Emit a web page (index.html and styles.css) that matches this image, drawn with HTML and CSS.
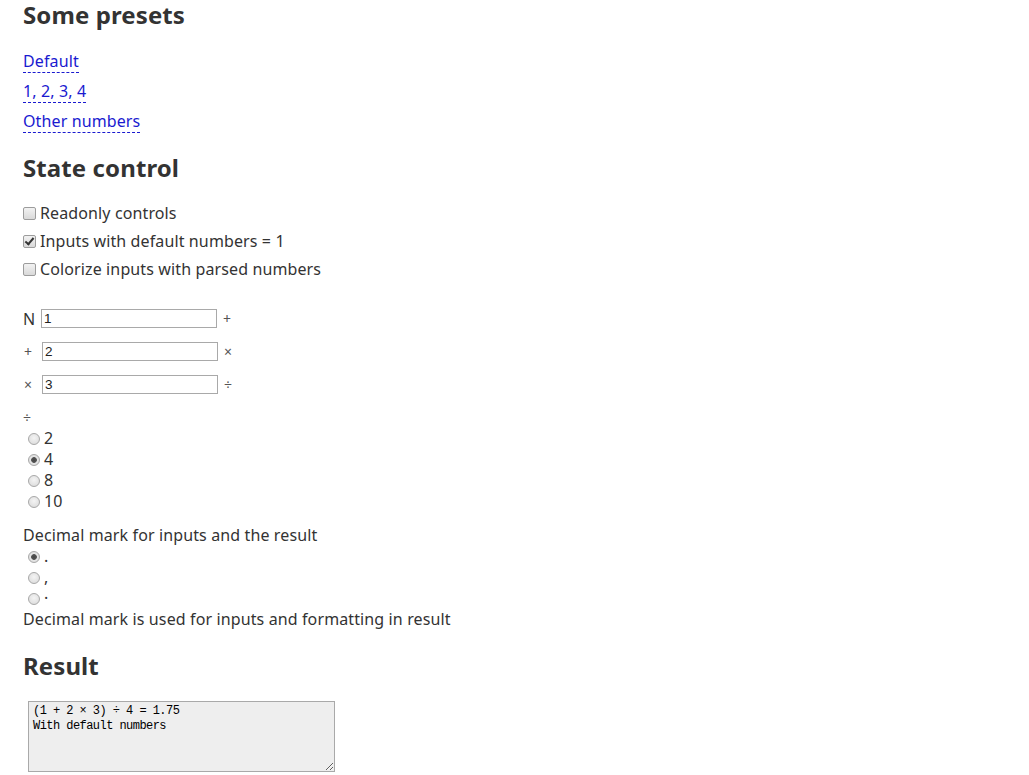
FILE: index.html
```html
<!DOCTYPE html>
<html>
<head>
<meta charset="utf-8">
<title>Presets</title>
<link rel="stylesheet" href="styles.css">
</head>
<body>
<h2 class="title">Some presets</h2>
<div class="presets">
  <div class="preset-row"><a class="preset" href="#">Default</a></div>
  <div class="preset-row"><a class="preset" href="#">1, 2, 3, 4</a></div>
  <div class="preset-row"><a class="preset" href="#">Other numbers</a></div>
</div>

<h2 class="title title-state">State control</h2>
<div class="checks">
  <label class="check-row"><input type="checkbox" class="box"><span>Readonly controls</span></label>
  <label class="check-row"><input type="checkbox" class="box" checked><span>Inputs with default numbers = 1</span></label>
  <label class="check-row"><input type="checkbox" class="box"><span>Colorize inputs with parsed numbers</span></label>
</div>

<div class="inputs">
  <div class="input-row"><span class="op op-left">N</span><input class="num" type="text" value="1"><span class="op op-right">+</span></div>
  <div class="input-row"><span class="op op-left">+</span><input class="num" type="text" value="2"><span class="op op-right">×</span></div>
  <div class="input-row"><span class="op op-left">×</span><input class="num" type="text" value="3"><span class="op op-right">÷</span></div>
</div>

<div class="radios">
  <div class="line op-line">÷</div>
  <label class="line radio-row"><input type="radio" name="div" class="rad"><span>2</span></label>
  <label class="line radio-row"><input type="radio" name="div" class="rad" checked><span>4</span></label>
  <label class="line radio-row"><input type="radio" name="div" class="rad"><span>8</span></label>
  <label class="line radio-row"><input type="radio" name="div" class="rad"><span>10</span></label>
</div>

<div class="decimal">
  <div class="line">Decimal mark for inputs and the result</div>
  <label class="line radio-row"><input type="radio" name="dec" class="rad" checked><span>.</span></label>
  <label class="line radio-row"><input type="radio" name="dec" class="rad"><span>,</span></label>
  <label class="line radio-row"><input type="radio" name="dec" class="rad"><span>·</span></label>
  <div class="line">Decimal mark is used for inputs and formatting in result</div>
</div>

<h2 class="title title-result">Result</h2>
<textarea class="result" readonly>(1 + 2 × 3) ÷ 4 = 1.75
With default numbers</textarea>
</body>
</html>
```
FILE: styles.css
```css
html, body {
  margin: 0;
  padding: 0;
  background: #fff;
}
body {
  padding: 0 23px;
  font-family: "Noto Sans", "Open Sans", sans-serif;
  font-size: 16px;
  letter-spacing: 0.12px;
  color: #333;
}
.title {
  margin: 0;
  font-size: 24px;
  line-height: 30px;
  font-weight: bold;
  letter-spacing: 0.1px;
  color: #333;
  height: 30px;
}
.presets {
  margin-top: 16px;
}
.preset-row {
  padding: 4px 0;
  height: 22px;
}
.preset {
  display: inline-block;
  line-height: 20px;
  padding-bottom: 1px;
  color: #1a1ad0;
  text-decoration: none;
  border-bottom: 1px dashed #1a1ad0;
  height: 22px;
  box-sizing: border-box;
}
.title-state {
  margin-top: 17px;
}
.checks {
  margin-top: 16px;
}
.check-row {
  display: flex;
  align-items: center;
  height: 28px;
}
.box {
  -webkit-appearance: none;
  appearance: none;
  width: 13px;
  height: 13px;
  margin: 0 4px 0 0;
  border: 1px solid #9c9c9c;
  border-radius: 2px;
  background: linear-gradient(#f2f2f2, #d9d9d9);
  position: relative;
  box-sizing: border-box;
}
.box:checked::after {
  content: "";
  position: absolute;
  left: 3px;
  top: 0px;
  width: 3px;
  height: 7px;
  border-right: 2px solid #333;
  border-bottom: 2px solid #333;
  transform: rotate(40deg);
}
.inputs {
  margin-top: 19px;
}
.input-row {
  display: flex;
  align-items: center;
  height: 33px;
}
.op-left {
  width: 18px;
  flex: none;
}
.op-right {
  margin-left: 6px;
  font-size: 14px;
  color: #555;
}
.input-row:not(:first-child) .op-left {
  font-size: 14px;
  color: #555;
  padding-left: 1px;
}
.num {
  width: 176px;
  height: 19px;
  box-sizing: border-box;
  margin: 0;
  padding: 0 2px;
  border: 1px solid #a9a9a9;
  font-family: "Liberation Sans", Arial, sans-serif;
  font-size: 13.5px;
  color: #222;
  background: #fff;
}
.radios {
  margin-top: 6px;
}
.line {
  height: 21px;
  line-height: 21px;
}
.op-line {
  font-size: 14px;
  color: #555;
}
.radio-row {
  display: flex;
  align-items: center;
}
.rad {
  -webkit-appearance: none;
  appearance: none;
  width: 12px;
  height: 12px;
  margin: 0 4px 0 5px;
  border: 1px solid #a8a8a8;
  border-radius: 50%;
  background: radial-gradient(circle at 50% 40%, #f4f4f4, #d8d8d8);
  box-sizing: border-box;
}
.rad:checked {
  background: radial-gradient(circle, #444 0, #555 2.5px, #e6e6e6 3.2px, #d8d8d8 100%);
}
.decimal {
  margin-top: 13px;
}
.title-result {
  margin-top: 21px;
}
.result {
  display: block;
  margin: 20px 0 0 5px;
  width: 307px;
  height: 71px;
  box-sizing: border-box;
  border: 1px solid #a9a9a9;
  background: #eeeeee;
  padding: 2px 4px 1px;
  font-family: "Liberation Mono", "DejaVu Sans Mono", monospace;
  font-size: 12px;
  letter-spacing: -0.55px;
  line-height: 15px;
  color: #000;
  resize: both;
}
```
